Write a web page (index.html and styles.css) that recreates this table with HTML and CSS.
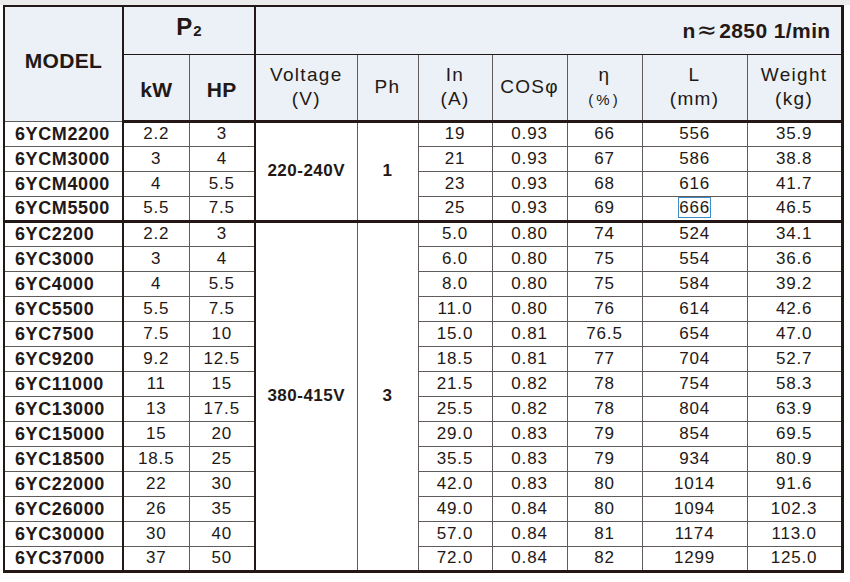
FILE: index.html
```html
<!DOCTYPE html>
<html>
<head>
<meta charset="utf-8">
<link rel="stylesheet" href="styles.css">
</head>
<body>
<div class="page">
<table class="spec">
  <colgroup>
    <col class="c-model"><col class="c-kw"><col class="c-hp"><col class="c-volt"><col class="c-ph">
    <col class="c-in"><col class="c-cos"><col class="c-eta"><col class="c-l"><col class="c-wt">
  </colgroup>
  <thead>
    <tr class="h1">
      <th rowspan="2" class="model-h thick-r">MODEL</th>
      <th colspan="2" class="p2 thick-r">P<sub>2</sub></th>
      <th colspan="7" class="speed">n<span class="approx">≈</span>2850 1/min</th>
    </tr>
    <tr class="h2">
      <th class="bold-h">kW</th>
      <th class="bold-h thick-r">HP</th>
      <th>Voltage<br>(V)</th>
      <th>Ph</th>
      <th>In<br>(A)</th>
      <th>COSφ</th>
      <th class="eta">η<br><span class="pct">(%)</span></th>
      <th>L<br>(mm)</th>
      <th>Weight<br>(kg)</th>
    </tr>
  </thead>
  <tbody class="grp">
    <tr><td class="m thick-r">6YCM2200</td><td>2.2</td><td class="thick-r">3</td><td rowspan="4" class="merged">220-240V</td><td rowspan="4" class="merged">1</td><td>19</td><td>0.93</td><td>66</td><td>556</td><td>35.9</td></tr>
    <tr><td class="m thick-r">6YCM3000</td><td>3</td><td class="thick-r">4</td><td>21</td><td>0.93</td><td>67</td><td>586</td><td>38.8</td></tr>
    <tr><td class="m thick-r">6YCM4000</td><td>4</td><td class="thick-r">5.5</td><td>23</td><td>0.93</td><td>68</td><td>616</td><td>41.7</td></tr>
    <tr><td class="m thick-r">6YCM5500</td><td>5.5</td><td class="thick-r">7.5</td><td>25</td><td>0.93</td><td>69</td><td><span class="sel">666</span></td><td>46.5</td></tr>
  </tbody>
  <tbody class="grp">
    <tr><td class="m thick-r">6YC2200</td><td>2.2</td><td class="thick-r">3</td><td rowspan="14" class="merged">380-415V</td><td rowspan="14" class="merged">3</td><td>5.0</td><td>0.80</td><td>74</td><td>524</td><td>34.1</td></tr>
    <tr><td class="m thick-r">6YC3000</td><td>3</td><td class="thick-r">4</td><td>6.0</td><td>0.80</td><td>75</td><td>554</td><td>36.6</td></tr>
    <tr><td class="m thick-r">6YC4000</td><td>4</td><td class="thick-r">5.5</td><td>8.0</td><td>0.80</td><td>75</td><td>584</td><td>39.2</td></tr>
    <tr><td class="m thick-r">6YC5500</td><td>5.5</td><td class="thick-r">7.5</td><td>11.0</td><td>0.80</td><td>76</td><td>614</td><td>42.6</td></tr>
    <tr><td class="m thick-r">6YC7500</td><td>7.5</td><td class="thick-r">10</td><td>15.0</td><td>0.81</td><td>76.5</td><td>654</td><td>47.0</td></tr>
    <tr><td class="m thick-r">6YC9200</td><td>9.2</td><td class="thick-r">12.5</td><td>18.5</td><td>0.81</td><td>77</td><td>704</td><td>52.7</td></tr>
    <tr><td class="m thick-r">6YC11000</td><td>11</td><td class="thick-r">15</td><td>21.5</td><td>0.82</td><td>78</td><td>754</td><td>58.3</td></tr>
    <tr><td class="m thick-r">6YC13000</td><td>13</td><td class="thick-r">17.5</td><td>25.5</td><td>0.82</td><td>78</td><td>804</td><td>63.9</td></tr>
    <tr><td class="m thick-r">6YC15000</td><td>15</td><td class="thick-r">20</td><td>29.0</td><td>0.83</td><td>79</td><td>854</td><td>69.5</td></tr>
    <tr><td class="m thick-r">6YC18500</td><td>18.5</td><td class="thick-r">25</td><td>35.5</td><td>0.83</td><td>79</td><td>934</td><td>80.9</td></tr>
    <tr><td class="m thick-r">6YC22000</td><td>22</td><td class="thick-r">30</td><td>42.0</td><td>0.83</td><td>80</td><td>1014</td><td>91.6</td></tr>
    <tr><td class="m thick-r">6YC26000</td><td>26</td><td class="thick-r">35</td><td>49.0</td><td>0.84</td><td>80</td><td>1094</td><td>102.3</td></tr>
    <tr><td class="m thick-r">6YC30000</td><td>30</td><td class="thick-r">40</td><td>57.0</td><td>0.84</td><td>81</td><td>1174</td><td>113.0</td></tr>
    <tr><td class="m thick-r">6YC37000</td><td>37</td><td class="thick-r">50</td><td>72.0</td><td>0.84</td><td>82</td><td>1299</td><td>125.0</td></tr>
  </tbody>
</table>
</div>
</body>
</html>
```

FILE: styles.css
```css
html, body {
  margin: 0;
  padding: 0;
  background: #ffffff;
}

.page {
  padding: 5px 0 0 3px;
  background: linear-gradient(#ebebeb 5px, #ffffff 5px);
  height: 577px;
}

.spec {
  border-collapse: collapse;
  table-layout: fixed;
  width: 840px;
  font-family: "Liberation Sans", Arial, sans-serif;
  color: #231815;
  border-top: 2px solid #231815;
  border-left: 2px solid #231815;
  border-right: 3px solid #231815;
  border-bottom: 3px solid #231815;
}

.c-model { width: 119px; }
.c-kw { width: 66px; }
.c-hp { width: 66px; }
.c-volt { width: 102px; }
.c-ph { width: 61px; }
.c-in { width: 74px; }
.c-cos { width: 75px; }
.c-eta { width: 75px; }
.c-l { width: 105px; }
.c-wt { width: 95px; }

th, td {
  border: 1px solid #5f5c5b;
  padding: 0;
  text-align: center;
  vertical-align: middle;
}

thead th {
  background: #ebf1f6;
  font-weight: normal;
  font-size: 19px;
  letter-spacing: 1.3px;
  line-height: 24px;
}

.h1 { height: 48px; }
.h2 { height: 67px; }

thead th.model-h {
  font-weight: bold;
  font-size: 21px;
  letter-spacing: 0.3px;
  padding-bottom: 6px;
}

thead th.p2 {
  font-weight: bold;
  font-size: 24px;
  letter-spacing: 0;
  border-bottom: 1px solid #231815;
  padding-bottom: 4px;
}

.p2 sub {
  font-size: 15px;
  vertical-align: baseline;
  position: relative;
  top: 1px;
  margin-left: 1px;
}

thead th.speed {
  font-weight: bold;
  font-size: 21px;
  letter-spacing: 0.4px;
  text-align: right;
  padding-right: 10px;
  border-bottom: 1px solid #231815;
}

.approx {
  font-family: "DejaVu Sans", sans-serif;
  font-weight: normal;
  font-size: 24px;
  margin: 0 2px 0 1px;
}

thead th.bold-h {
  font-weight: bold;
  font-size: 21px;
  letter-spacing: 0.3px;
  padding-top: 6px;
}

.eta .pct {
  font-size: 15px;
  letter-spacing: 3px;
}

thead tr.h2 th { border-bottom: 3px solid #231815; }

.thick-r { border-right: 2px solid #231815; }

tbody tr { height: 25px; }

td {
  font-size: 17px;
  line-height: 20px;
  letter-spacing: 0.8px;
}

td.m {
  font-weight: bold;
  font-size: 18px;
  letter-spacing: 0.6px;
  text-align: left;
  padding-left: 10px;
}

td.merged {
  font-weight: bold;
  font-size: 17px;
  letter-spacing: 0.5px;
}

tbody.grp + tbody.grp tr:first-child td { border-top: 3px solid #231815; }

.sel {
  outline: 1px solid #3f8ccb;
  outline-offset: 0;
}
```
